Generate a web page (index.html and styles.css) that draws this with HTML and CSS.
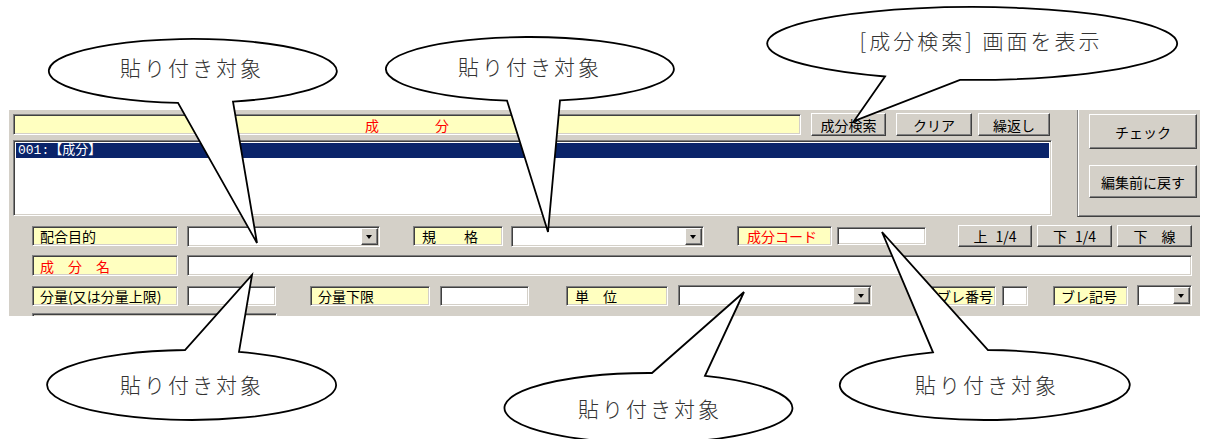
FILE: index.html
```html
<!DOCTYPE html>
<html lang="ja">
<head>
  <meta charset="UTF-8">
  <meta name="viewport" content="width=device-width, initial-scale=1.0">
  <title>成分入力</title>
  <link rel="stylesheet" href="styles.css">
</head>
<body>
<div class="sheet">
  <div class="window">
    <div class="top">
      <div class="main-col">
        <div class="search-row">
          <div class="sunken title">成　　　　分</div>
          <button class="btn b-search">成分検索</button>
          <button class="btn b-clear">クリア</button>
          <button class="btn b-repeat">繰返し</button>
        </div>
        <div class="sunken list">
          <div class="list-item selected">001:【成分】</div>
        </div>
      </div>
      <div class="side">
        <button class="btn b-check">チェック</button>
        <button class="btn b-undo">編集前に戻す</button>
      </div>
    </div>

    <div class="row row-a">
      <div class="sunken label l-purpose">配合目的</div>
      <div class="sunken combo c-purpose"><span class="drop"></span></div>
      <div class="sunken label l-spec">規　　格</div>
      <div class="sunken combo c-spec"><span class="drop"></span></div>
      <div class="sunken label red l-code">成分コード</div>
      <div class="sunken input i-code"></div>
      <button class="btn b-up">上 1/4</button>
      <button class="btn b-down">下 1/4</button>
      <button class="btn b-line">下　線</button>
    </div>

    <div class="row row-b">
      <div class="sunken label red l-name">成　分　名</div>
      <div class="sunken input i-name"></div>
    </div>

    <div class="row row-c">
      <div class="sunken label l-qty">分量(又は分量上限)</div>
      <div class="sunken input i-qty"></div>
      <div class="sunken label l-min">分量下限</div>
      <div class="sunken input i-min"></div>
      <div class="sunken label l-unit">単　位</div>
      <div class="sunken combo c-unit"><span class="drop"></span></div>
      <div class="sunken label l-bno">ブレ番号</div>
      <div class="sunken input i-bno"></div>
      <div class="sunken label l-bmark">ブレ記号</div>
      <div class="sunken combo c-bmark"><span class="drop"></span></div>
    </div>

    <div class="row row-d">
      <div class="sunken next"></div>
    </div>
  </div>

  <!-- callouts drawn over the form -->
  <svg class="callouts" width="1206" height="439" viewBox="0 0 1206 439">
    <path class="bubble" d="M178 102.8 A144 32 0 1 1 233 101.7 L257 243 Z"/>
    <text class="note" x="192" y="67">貼り付き対象</text>

    <path class="bubble" d="M507 100.6 A144 32 0 1 1 560 100.3 L548 232 Z"/>
    <text class="note" x="530" y="66">貼り付き対象</text>

    <path class="bubble" d="M885 76.5 A205 36.5 0 1 1 960 79.9 L854 121 Z"/>
    <text class="note" x="981" y="40">[成分検索] 画面を表示</text>

    <path class="bubble" d="M185 350 A144.5 35 0 1 0 239 351.9 L252 275 Z"/>
    <text class="note" x="192" y="384">貼り付き対象</text>

    <path class="bubble" d="M652 373 A144 35 0 1 0 705 375.8 L744 292 Z"/>
    <text class="note" x="650" y="408">貼り付き対象</text>

    <path class="bubble" d="M933 352.3 A145 35 0 1 0 988 350 L882 232 Z"/>
    <text class="note" x="987" y="384">貼り付き対象</text>
  </svg>
</div>
</body>
</html>
```

FILE: styles.css
```css
:root {
  --face: #d4d0c8;
  --shadow: #808080;
  --dark: #404040;
  --note: #ffffc0;
  --select: #0a246a;
}

body {
  margin: 0;
  background: #fff;
}

.sheet {
  position: relative;
  width: 1206px;
  height: 439px;
  overflow: hidden;
}

.window {
  width: 1191px;
  height: 206px;
  margin: 110px 0 0 9px;
  background: var(--face);
  overflow: hidden;
  font-family: "Noto Sans CJK JP", sans-serif;
  font-size: 14px;
  color: #000;
}

/* win classic borders */
.sunken {
  display: flex;
  align-items: center;
  box-sizing: border-box;
  border: 1px solid;
  border-color: var(--shadow) #fff #fff var(--shadow);
  box-shadow: inset 1px 1px 0 var(--dark), inset -1px -1px 0 var(--face);
}

.btn {
  display: flex;
  align-items: center;
  justify-content: center;
  box-sizing: border-box;
  padding: 0;
  background: var(--face);
  border: 1px solid;
  border-color: #fff var(--dark) var(--dark) #fff;
  box-shadow: inset -1px -1px 0 var(--shadow);
  font: inherit;
  color: #000;
  white-space: pre;
  word-spacing: 5px;
}

/* top part */
.top {
  display: flex;
  height: 107px;
}

.main-col {
  width: 1068px;
  box-sizing: border-box;
  padding: 3px 0 0 4px;
}

.search-row {
  display: flex;
  align-items: center;
  height: 23px;
}

.title {
  width: 788px;
  height: 21px;
  justify-content: center;
  background: var(--note);
  color: red;
}

.search-row .btn {
  height: 23px;
}

.b-search { width: 75px; margin-left: 10px; }
.b-clear { width: 76px; margin-left: 10px; }
.b-repeat { width: 72px; margin-left: 6px; }

.list {
  display: block;
  width: 1039px;
  height: 76px;
  margin-top: 4px;
  padding: 2px;
  background: #fff;
}

.list-item {
  height: 15px;
  padding-left: 2px;
  font-family: "Liberation Mono", "Noto Sans CJK JP", monospace;
  font-size: 13px;
  line-height: 15px;
}

.list-item.selected {
  background: var(--select);
  color: #fff;
}

.side {
  flex: 1;
  display: flex;
  flex-direction: column;
  gap: 16px;
  padding: 4px 0 0 11px;
  border-left: 1px solid var(--shadow);
  border-bottom: 1px solid var(--dark);
  box-shadow: inset 1px 0 0 #fff, inset 0 -1px 0 var(--shadow);
}

.b-check { width: 108px; height: 35px; }
.b-undo { width: 108px; height: 33px; }

/* field rows */
.row {
  display: flex;
  align-items: center;
  padding-left: 23px;
}

.row-a { height: 22px; margin-top: 8px; }
.row-b { height: 21px; margin-top: 8px; }
.row-c { height: 21px; margin-top: 9px; }
.row-d { height: 20px; margin-top: 7px; align-items: flex-start; }

.label {
  height: 20px;
  padding-left: 7px;
  background: var(--note);
  white-space: nowrap;
}

.label.red {
  color: red;
}

.input {
  height: 20px;
  background: #fff;
}

.combo {
  height: 21px;
  padding: 1px;
  justify-content: flex-end;
  align-items: stretch;
  background: #fff;
}

.drop {
  position: relative;
  width: 17px;
  box-sizing: border-box;
  background: var(--face);
  border: 1px solid;
  border-color: #fff var(--dark) var(--dark) #fff;
  box-shadow: inset -1px -1px 0 var(--shadow);
}

.drop::after {
  content: "";
  position: absolute;
  left: 4px;
  top: 6px;
  border-left: 3.5px solid transparent;
  border-right: 3.5px solid transparent;
  border-top: 4px solid #000;
}

.l-purpose { width: 146px; }
.c-purpose { width: 193px; margin-left: 9px; }
.l-spec { width: 90px; margin-left: 33px; padding-left: 8px; }
.c-spec { width: 193px; margin-left: 8px; }
.l-code { width: 95px; margin-left: 33px; padding-left: 9px; }
.i-code { width: 89px; height: 18px; margin-left: 5px; }
.row-a .btn { height: 22px; }
.b-up { width: 74px; margin-left: 32px; }
.b-down { width: 75px; margin-left: 5px; }
.b-line { width: 75px; margin-left: 5px; }

.l-name { width: 146px; height: 21px; }
.i-name { width: 1005px; height: 21px; margin-left: 9px; }

.l-qty { width: 146px; }
.i-qty { width: 89px; margin-left: 9px; }
.l-min { width: 120px; margin-left: 34px; }
.i-min { width: 89px; margin-left: 10px; }
.l-unit { width: 102px; margin-left: 37px; padding-left: 8px; }
.c-unit { width: 194px; margin-left: 10px; }
.l-bno { width: 64px; margin-left: 60px; padding-left: 4px; }
.i-bno { width: 26px; margin-left: 6px; }
.l-bmark { width: 75px; margin-left: 25px; }
.c-bmark { width: 55px; margin-left: 9px; }

.next {
  width: 245px;
  height: 20px;
  background: var(--face);
}

/* callouts */
.callouts {
  position: absolute;
  top: 0;
  left: 0;
  pointer-events: none;
}

.bubble {
  fill: #fff;
  stroke: #000;
  stroke-width: 1.8;
}

.note {
  font-family: "Noto Sans CJK JP", sans-serif;
  font-size: 21px;
  font-weight: 300;
  letter-spacing: 3px;
  fill: #333;
  text-anchor: middle;
  dominant-baseline: central;
}
```
